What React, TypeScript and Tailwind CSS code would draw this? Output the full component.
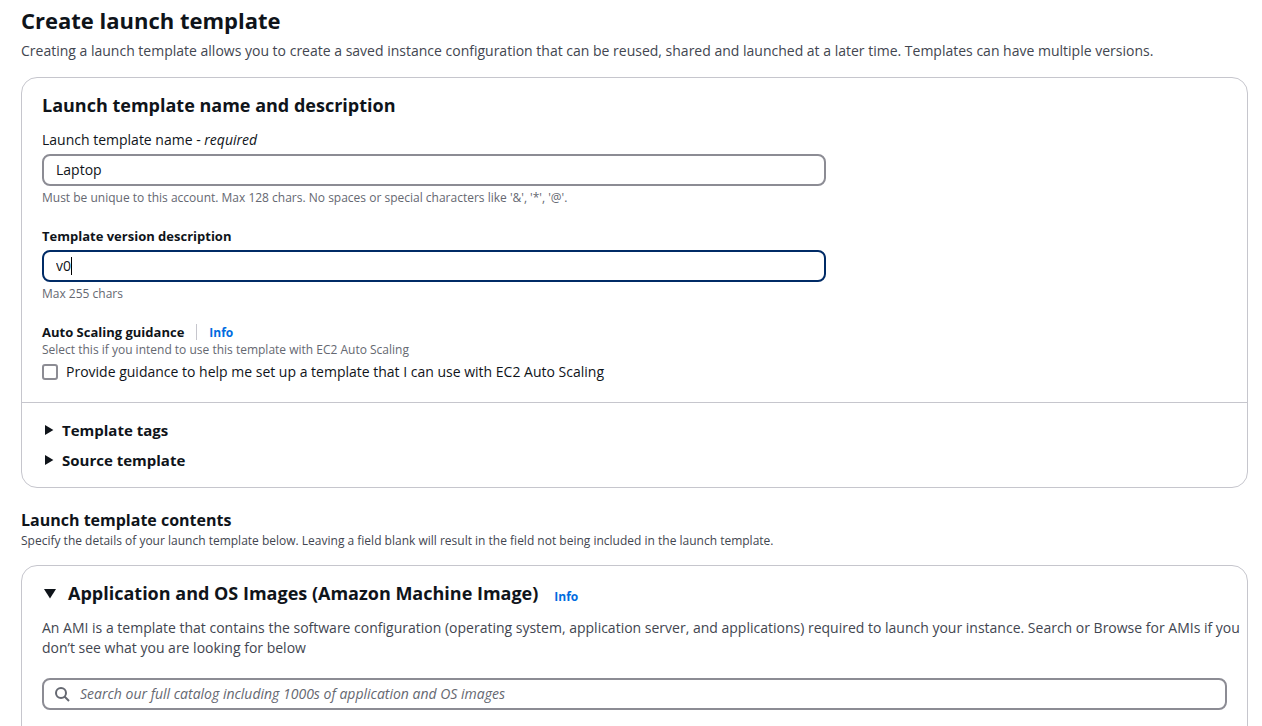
import { useState } from "react";
import type { ReactNode } from "react";

const inputClass =
  "block h-8 w-full rounded-lg border-2 border-[#8c8c94] bg-white px-3 pb-0.5 text-sm text-[#0f141a] outline-none focus:border-[#002b66]";

function Info() {
  return (
    <a href="#info" className="pt-0.5 text-xs leading-4 font-bold text-[#006ce0]">
      Info
    </a>
  );
}

function Hint({ id, children }: { id: string; children: ReactNode }) {
  return (
    <p id={id} className="text-xs leading-4 text-[#656871]">
      {children}
    </p>
  );
}

function Expander({ children }: { children: ReactNode }) {
  const [open, setOpen] = useState(false);
  return (
    <button
      type="button"
      aria-expanded={open}
      onClick={() => setOpen(!open)}
      className="flex h-[30px] items-center gap-2 text-left text-[15px] leading-5 font-bold"
    >
      <svg width="12" height="12" viewBox="0 0 12 12" className="shrink-0" aria-hidden="true">
        <path d={open ? "M1 3h10l-5 8z" : "M3 1v10l8.4-5z"} fill="currentColor" />
      </svg>
      {children}
    </button>
  );
}

export default function App() {
  const [name, setName] = useState("Laptop");
  const [description, setDescription] = useState("v0");
  const [editing, setEditing] = useState(true);
  const [guidance, setGuidance] = useState(false);
  const [imagesOpen, setImagesOpen] = useState(true);
  const [query, setQuery] = useState("");

  return (
    <main className="h-screen overflow-hidden bg-white pr-[14px] pl-[21px] font-['Open_Sans','Noto_Sans',sans-serif] text-[#0f141a]">
      <header className="pt-[5px]">
        <h1 className="text-[22px] leading-[30px] font-bold">Create launch template</h1>
        <p className="pt-1.5 text-sm leading-5 text-[#424650]">
          Creating a launch template allows you to create a saved instance configuration that can be reused, shared
          and launched at a later time. Templates can have multiple versions.
        </p>
      </header>

      <section className="mt-4 rounded-2xl border border-[#c6c6cd]">
        <div className="px-5 pt-[15px] pb-5">
          <h2 className="text-lg leading-6 font-bold">Launch template name and description</h2>
          <div className="flex max-w-[784px] flex-col gap-5 pt-[13px]">
            <div className="flex flex-col gap-1">
              <label htmlFor="name" className="text-sm leading-5">
                Launch template name - <i>required</i>
              </label>
              <input
                id="name"
                value={name}
                aria-describedby="name-hint"
                onChange={(e) => setName(e.target.value)}
                className={inputClass}
              />
              <Hint id="name-hint">
                Must be unique to this account. Max 128 chars. No spaces or special characters like '&amp;', '*', '@'.
              </Hint>
            </div>

            <div className="flex flex-col gap-1">
              <label htmlFor="description" className="text-[13px] leading-5 font-bold">
                Template version description
              </label>
              <div className="relative text-sm">
                <input
                  id="description"
                  autoFocus
                  value={description}
                  aria-describedby="description-hint"
                  onChange={(e) => setDescription(e.target.value)}
                  onFocus={() => setEditing(true)}
                  onBlur={() => setEditing(false)}
                  className={`${inputClass} caret-transparent`}
                />
                {editing && (
                  <span
                    className="absolute top-[7px] h-[18px] w-px bg-black"
                    style={{ left: `calc(13px + ${description.length}ch)` }}
                  />
                )}
              </div>
              <Hint id="description-hint">Max 255 chars</Hint>
            </div>

            <div>
              <div className="flex h-5 items-center">
                <h3 className="text-[13px] leading-5 font-bold">Auto Scaling guidance</h3>
                <span className="mr-3 ml-3 h-4 w-px bg-[#c6c6cd]" />
                <Info />
              </div>
              <Hint id="guidance-hint">Select this if you intend to use this template with EC2 Auto Scaling</Hint>
              <label className="mt-1 flex items-center gap-2 text-sm leading-5">
                <input
                  type="checkbox"
                  checked={guidance}
                  aria-describedby="guidance-hint"
                  onChange={(e) => setGuidance(e.target.checked)}
                  className="size-4 appearance-none rounded-[3px] border-2 border-[#8c8c94] bg-white checked:border-[#006ce0] checked:bg-[#006ce0]"
                />
                Provide guidance to help me set up a template that I can use with EC2 Auto Scaling
              </label>
            </div>
          </div>
        </div>
        <div className="border-t border-[#c6c6cd] px-5 py-3">
          <Expander>Template tags</Expander>
          <Expander>Source template</Expander>
        </div>
      </section>

      <header className="mt-5">
        <h2 className="text-base leading-6 font-bold">Launch template contents</h2>
        <p className="text-xs leading-[18px] text-[#424650]">
          Specify the details of your launch template below. Leaving a field blank will result in the field not being
          included in the launch template.
        </p>
      </header>

      <section className="mt-[15px] rounded-2xl border border-[#c6c6cd] pt-[15px] pb-10">
        <div className="flex h-6 items-end gap-4 px-5">
          <h2 className="text-lg leading-6 font-bold">
            <button
              type="button"
              aria-expanded={imagesOpen}
              onClick={() => setImagesOpen(!imagesOpen)}
              className="flex items-center gap-2.5 text-left"
            >
              <svg width="16" height="16" viewBox="0 0 16 16" className="shrink-0" aria-hidden="true">
                <path d={imagesOpen ? "M2 4h12l-6 9.6z" : "M4 2v12l9.6-6z"} fill="currentColor" />
              </svg>
              Application and OS Images (Amazon Machine Image)
            </button>
          </h2>
          <Info />
        </div>
        {imagesOpen && (
          <>
            <p className="pt-[13px] pr-1 pl-5 text-sm leading-5 text-[#424650]">
              An AMI is a template that contains the software configuration (operating system, application server, and
              applications) required to launch your instance. Search or Browse for AMIs if you don’t see what you are
              looking for below
            </p>
            <div className="px-5 pt-5">
              <label className="flex h-8 items-center gap-2.5 rounded-lg border-2 border-[#8c8c94] px-2.5 focus-within:border-[#002b66]">
                <svg
                  width="16"
                  height="16"
                  viewBox="0 0 16 16"
                  className="shrink-0 text-[#656871]"
                  fill="none"
                  stroke="currentColor"
                  strokeWidth="2"
                  aria-hidden="true"
                >
                  <circle cx="7" cy="7" r="5" />
                  <path d="m15 15-4.5-4.5" />
                </svg>
                <input
                  type="search"
                  aria-label="Search images"
                  value={query}
                  onChange={(e) => setQuery(e.target.value)}
                  placeholder="Search our full catalog including 1000s of application and OS images"
                  className="min-w-0 flex-1 text-sm outline-none placeholder:text-[#656871] placeholder:italic"
                />
              </label>
            </div>
          </>
        )}
      </section>
    </main>
  );
}
